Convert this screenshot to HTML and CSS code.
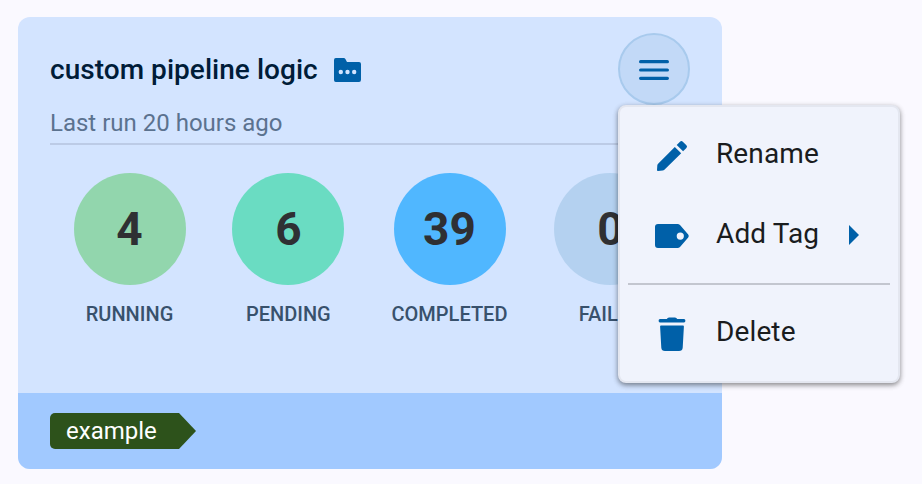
FILE: index.html
```html
<!DOCTYPE html>
<html lang="en">
<head>
<meta charset="utf-8">
<title>Pipelines</title>
<link rel="stylesheet" href="styles.css">
</head>
<body>
<article class="card">
  <div class="card-body">
    <header class="card-header">
      <div class="heading">
        <h2 class="title">custom pipeline logic</h2>
        <svg class="folder" width="28" height="24" viewBox="0 0 28 24">
          <path fill="#0060a8" d="M1.8 0H9.8Q10.8 0 11.4 1L13 4H25Q27 4 27 6V21.8Q27 24 25 24H1.8Q0 24 0 22V2Q0 0 1.8 0Z"/>
          <g fill="#d3e4ff"><circle cx="6.8" cy="14" r="2.2"/><circle cx="13.5" cy="14" r="2.2"/><circle cx="20.2" cy="14" r="2.2"/></g>
        </svg>
      </div>
      <p class="subtitle">Last run 20 hours ago</p>
    </header>
    <ul class="stats">
      <li class="stat"><span class="count running">4</span><span class="label">RUNNING</span></li>
      <li class="stat"><span class="count pending">6</span><span class="label">PENDING</span></li>
      <li class="stat"><span class="count completed">39</span><span class="label">COMPLETED</span></li>
      <li class="stat"><span class="count failed">0</span><span class="label">FAILED</span></li>
    </ul>
  </div>
  <footer class="card-footer"><span class="tag">example</span></footer>
  <button class="menu-button" aria-label="Menu">
    <svg width="30" height="22" viewBox="0 0 30 22" stroke="#0060a8" stroke-width="3.2" stroke-linecap="round"><path d="M1.6 2.7H28.4M1.6 11H28.4M1.6 19.3H28.4"/></svg>
  </button>
  <div class="menu">
    <div class="item">
      <svg class="icon" width="40" height="40" viewBox="0 -.8 40 40" fill="#0060a8"><path d="M6 34.2Q5 34.3 5 33.2L5.3 28.6Q5.4 27.6 6.1 26.9L22.8 10.1L29.2 16.5L12.4 33Q11.7 33.7 10.7 33.8ZM24.7 8.2L28 4.9Q29.4 3.5 30.8 4.9L34.4 8.5Q35.7 9.8 34.4 11.2L31.1 14.5Z"/></svg>
      <span class="text">Rename</span>
    </div>
    <div class="item">
      <svg class="icon" width="40" height="40" viewBox="0 0 40 40" fill="#0060a8"><path fill-rule="evenodd" d="M6 8H25.5Q27 8 28 9L36.2 18.5Q37.4 20 36.2 21.5L28 31Q27 32 25.5 32H6Q3 32 3 29V11Q3 8 6 8ZM28.3 16.5A3.6 3.6 0 1 0 28.3 23.7A3.6 3.6 0 1 0 28.3 16.5Z"/></svg>
      <span class="text">Add Tag</span>
      <svg class="arrow" width="10" height="20" viewBox="0 0 10 20" fill="#0060a8"><path d="M0 0L10 10L0 20Z"/></svg>
    </div>
    <hr class="divider">
    <div class="item">
      <svg class="icon" width="40" height="40" viewBox="0 0 40 40" fill="#0060a8"><path d="M8 5H14.8Q15.5 3.5 17 3.5H23Q24.5 3.5 25.2 5H32Q33.4 5 33.4 6.8Q33.4 8.6 32 8.6H8Q6.6 8.6 6.6 6.8Q6.6 5 8 5ZM9 11.6H31Q32 11.6 31.9 12.6L30.7 33.8Q30.4 37 27 37H13Q9.6 37 9.3 33.8L8.1 12.6Q8 11.6 9 11.6Z"/></svg>
      <span class="text">Delete</span>
    </div>
  </div>
</article>
</body>
</html>
```
FILE: styles.css
```css
* { box-sizing: border-box; }
body {
  margin: 0;
  padding: 17px 18px;
  background: #faf9ff;
  font-family: Roboto, "Liberation Sans", sans-serif;
  overflow: hidden;
}
.card {
  position: relative;
  display: flex;
  flex-direction: column;
  width: 704px;
  height: 452px;
  border-radius: 12px;
  background: #d3e4ff;
}
.card-body { flex: 1; padding: 32px 32px 0; }
.card-header { height: 96px; border-bottom: 2px solid #bccbe6; }
.heading { display: flex; align-items: center; gap: 16px; height: 42px; }
.title { margin: 0; font-size: 28px; font-weight: 500; line-height: 42px; letter-spacing: .04px; color: #001c38; }
.subtitle { margin: 16px 0 0; font-size: 24px; line-height: 32px; color: #5b728f; }
.stats {
  display: flex;
  justify-content: space-around;
  margin: 28px 0 0;
  padding: 0;
  list-style: none;
}
.stat { display: flex; flex-direction: column; align-items: center; gap: 15px; }
.stat:nth-child(2) { margin: 0 .2px 0 -.2px; }
.count {
  width: 112px;
  border-radius: 50%;
  font-size: 46px;
  font-weight: 700;
  line-height: 112px;
  text-align: center;
  color: #2f3033;
}
.running { background: #92d6ad; }
.pending { background: #6adcc2; }
.completed { background: #50b7ff; }
.failed { background: #b4d1f0; }
.label { font-size: 20px; font-weight: 500; line-height: 28px; color: #38516c; }
.card-footer {
  height: 76px;
  padding: 20px 32px;
  border-radius: 0 0 12px 12px;
  background: #a1c9ff;
}
.tag {
  display: block;
  width: 146px;
  height: 36px;
  padding-left: 16px;
  border-radius: 5px 0 0 5px;
  background: #2d521b;
  clip-path: polygon(0 0, 129px 0, 100% 50%, 129px 100%, 0 100%);
  font-size: 24px;
  line-height: 36px;
  color: #fff;
}
.menu-button {
  position: absolute;
  top: 16px;
  left: 600px;
  display: flex;
  align-items: center;
  justify-content: center;
  width: 72px;
  height: 72px;
  padding: 2px 0 0;
  border: 2px solid #a8caed;
  border-radius: 50%;
  background: #c2d9f7;
}
.menu {
  position: absolute;
  top: 88px;
  left: 600px;
  width: 282px;
  height: 278px;
  padding: 8px;
  border: 2px solid #e4e7f0;
  border-radius: 8px;
  background: #f0f3fc;
  box-shadow: 0 2px 5px rgba(0, 0, 0, .38), 0 2px 6px rgba(0, 0, 0, .12);
}
.item { display: flex; align-items: center; height: 80px; padding-left: 24px; }
.icon { margin-top: 2px; }
.text {
  margin: -3px 0 0 24px;
  font-size: 28px;
  line-height: 40px;
  letter-spacing: .12px;
  color: #1a1c1e;
}
.arrow { margin-left: 30px; }
.divider { height: 2px; margin: 8px 0; border: 0; background: #c3c6cf; }
```
